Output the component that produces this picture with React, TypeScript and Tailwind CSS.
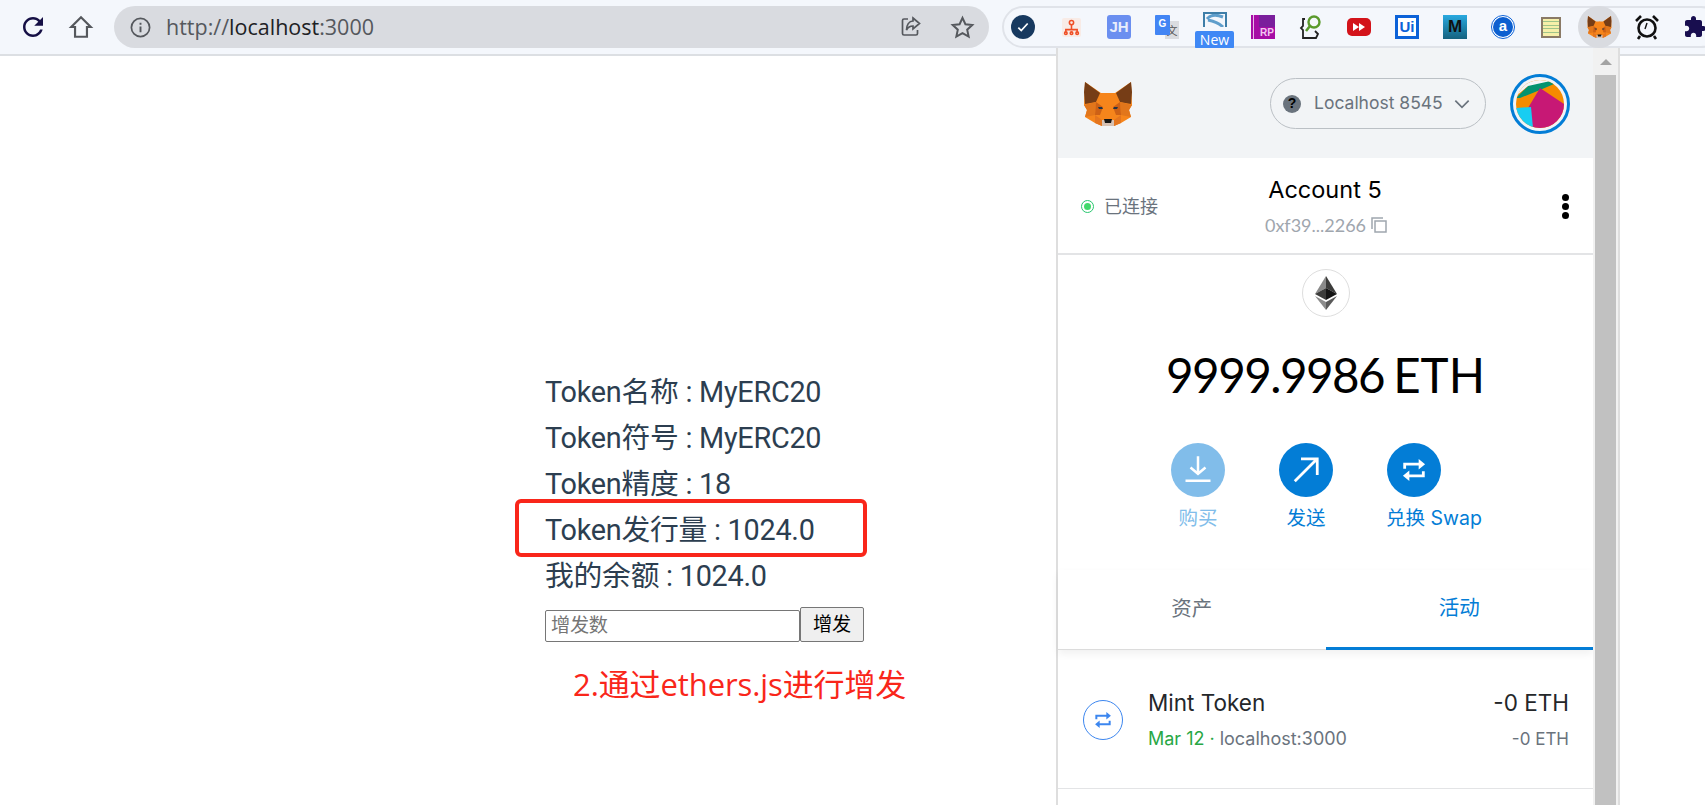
import React from 'react';

const Fox = ({ size }: { size: number }) => (
  <svg width={size} height={size * 0.94} viewBox="0 0 50 47">
    {/* head */}
    <polygon points="2,2 18,13 32,13 48,2 49,25 46,30 48,37 38,43 31,46 19,46 12,43 2,37 4,30 1,25" fill="#f6851b" />
    {/* ears */}
    <polygon points="2,2 17,13 13,22 2,24 1,12" fill="#763d16" />
    <polygon points="48,2 33,13 37,22 48,24 49,12" fill="#763d16" />
    {/* facets */}
    <polygon points="13,22 25,13 37,22 30,30 20,30" fill="#f6851b" />
    <polygon points="1,25 13,22 12,35 2,37 4,30" fill="#e2761b" />
    <polygon points="49,25 37,22 38,35 48,37 46,30" fill="#e2761b" />
    <polygon points="13,22 20,27 17,35 12,35" fill="#cd6116" />
    <polygon points="37,22 30,27 33,35 38,35" fill="#cd6116" />
    <polygon points="12,35 19,40 19,46 12,43" fill="#e4751f" />
    <polygon points="38,35 31,40 31,46 38,43" fill="#e4751f" />
    {/* muzzle */}
    <polygon points="19,40 31,40 31,46 19,46" fill="#d7c1b3" />
    <polygon points="21,39 29,39 28,43 22,43" fill="#161616" />
    {/* eyes */}
    <polygon points="15,27 19,27 20,29 16,29" fill="#233447" />
    <polygon points="35,27 31,27 30,29 34,29" fill="#233447" />
  </svg>
);

const SwapArrows = ({ size, color }: { size: number; color: string }) => (
  <svg width={size} height={size} viewBox="0 0 24 24" fill="none">
    <path d="M4 11V7h13M20 13v4H7" stroke={color} strokeWidth="2.4" />
    <path d="M16 2.5L21.5 7 16 11.5zM8 12.5L2.5 17 8 21.5z" fill={color} />
  </svg>
);

const Ext = ({ children }: { children: React.ReactNode }) => (
  <div className="w-[48px] h-[42px] flex items-center justify-center shrink-0 relative">{children}</div>
);

const ExtensionBar = () => (
  <div className="ml-[13px] h-[42px] w-[720px] shrink-0 flex items-center rounded-[21px] border-2 border-[#e0e3e9] bg-[#f4f7fc]">
    <div className="ml-[-5px] flex items-center">
      <Ext>
        <div className="w-[24px] h-[24px] rounded-full bg-[#17395f] flex items-center justify-center">
          <svg width="14" height="14" viewBox="0 0 24 24" fill="none">
            <path d="M4 13l5 5L20 6" stroke="#fff" strokeWidth="3" />
          </svg>
        </div>
      </Ext>
      <Ext>
        <div className="w-[19px] h-[19px] rounded-[2px] bg-[#f8ebe6] flex items-center justify-center">
          <svg width="17" height="17" viewBox="0 0 24 24" fill="none" stroke="#ef4f26" strokeWidth="2.2">
            <circle cx="12" cy="5" r="3" />
            <path d="M12 8v8M4 18v-3h16v3" />
            <circle cx="4" cy="20" r="1.8" />
            <circle cx="12" cy="20" r="1.8" />
            <circle cx="20" cy="20" r="1.8" />
          </svg>
        </div>
      </Ext>
      <Ext>
        <div className="w-[24px] h-[24px] rounded-[3px] bg-[#6b8ff0] flex items-center justify-center text-[#e8edfb] text-[15px] font-bold font-['Liberation_Sans',sans-serif]">JH</div>
      </Ext>
      <Ext>
        <div className="w-[24px] h-[24px] relative">
          <div className="absolute right-0 top-[6px] w-[14px] h-[18px] bg-[#dadce0] text-[#555] text-[11px] leading-[18px] text-center font-['Noto_Sans_CJK_SC',sans-serif]">文</div>
          <div className="absolute left-0 top-0 w-[15px] h-[20px] rounded-[1px] bg-[#4285f4] text-white text-[10px] font-bold leading-[18px] text-center font-['Liberation_Sans',sans-serif]">G</div>
        </div>
      </Ext>
      <Ext>
        <div className="absolute top-[6px] w-[24px] h-[15px] border-2 border-b-0 border-[#3e7ea8] overflow-hidden flex justify-center">
          <svg width="20" height="13" viewBox="0 0 20 13"><path d="M2 5C6 0 13 1 18 3M3 6c5 1 10 2 15 7" stroke="#5f9ecb" strokeWidth="3" fill="none" /></svg>
        </div>
        <div className="absolute bottom-[-1px] left-[4px] w-[39px] h-[18px] rounded-[2px] bg-[#3f88f5] text-white text-[14px] leading-[18px] text-center font-['Open_Sans',sans-serif]">New</div>
      </Ext>
      <Ext>
        <div className="w-[24px] h-[24px] bg-[#a60da5] relative overflow-hidden">
          <div className="absolute left-[2px] top-0 w-[1px] h-full bg-[#e9b8e8]" />
          <div className="absolute right-0 top-0 w-[16px] h-[12px] bg-[#7a1f9c]" />
          <div className="absolute right-[1px] bottom-[1px] text-[#f3c6f2] text-[10px] leading-[11px] font-bold font-['Liberation_Sans',sans-serif]">RP</div>
        </div>
      </Ext>
      <Ext>
        <svg width="24" height="26" viewBox="0 0 24 26" fill="none">
          <path d="M6 5H4v7l-2 2 2 2v8h13l2-4-3-3" stroke="#222" strokeWidth="1.8" />
          <circle cx="15" cy="8" r="5.5" stroke="#5a9a2c" strokeWidth="2.4" />
          <path d="M11 12l-4 5" stroke="#5a9a2c" strokeWidth="2.6" />
        </svg>
      </Ext>
      <Ext>
        <div className="w-[24px] h-[18px] rounded-[5px] bg-[#d3131a] flex items-center justify-center text-white">
          <svg width="14" height="10" viewBox="0 0 14 10" fill="#fff"><path d="M1 1l6 4-6 4zM7 1l6 4-6 4z" /></svg>
        </div>
      </Ext>
      <Ext>
        <div className="w-[24px] h-[24px] border-[3px] border-[#0c62d8] bg-white flex items-center justify-center text-[#0c62d8] text-[15px] font-bold font-['Liberation_Sans',sans-serif]">Ui</div>
      </Ext>
      <Ext>
        <div className="w-[24px] h-[24px] bg-gradient-to-b from-[#29a9e0] to-[#15627f] flex items-center justify-center text-[#111] text-[17px] font-bold font-['Liberation_Sans',sans-serif]">M</div>
      </Ext>
      <Ext>
        <div className="w-[24px] h-[24px] rounded-full border border-[#0c62d8] bg-white flex items-center justify-center">
          <div className="w-[20px] h-[20px] rounded-full bg-[#0c5fd0] text-white text-[15px] font-bold leading-[18px] text-center font-['Liberation_Sans',sans-serif]">a</div>
        </div>
      </Ext>
      <Ext>
        <div className="w-[20px] h-[21px] border-2 border-[#8a7a66] bg-[#f6efa9] flex flex-col justify-evenly">
          <div className="h-[1px] bg-[#9fc48a]" />
          <div className="h-[1px] bg-[#9fc48a]" />
          <div className="h-[1px] bg-[#9fc48a]" />
          <div className="h-[1px] bg-[#9fc48a]" />
        </div>
      </Ext>
      <Ext>
        <div className="w-[42px] h-[42px] rounded-full bg-[#d9dbe0] flex items-center justify-center">
          <Fox size={25} />
        </div>
      </Ext>
      <Ext>
        <svg width="24" height="26" viewBox="0 0 24 26" fill="none" stroke="#111">
          <circle cx="12" cy="14" r="8.5" strokeWidth="2.6" />
          <path d="M12 9l-2 6" strokeWidth="1.4" />
          <path d="M1 7l5-5M23 7l-5-5M5 22l-2 3M19 22l2 3" strokeWidth="2.6" />
        </svg>
      </Ext>
      <Ext>
        <svg width="24" height="24" viewBox="0 0 24 24" fill="#180e4f">
          <path d="M20.5 11H19V7c0-1.1-.9-2-2-2h-4V3.5C13 2.12 11.88 1 10.5 1S8 2.12 8 3.5V5H4c-1.1 0-1.99.9-1.99 2v3.8H3.5c1.49 0 2.7 1.21 2.7 2.7s-1.21 2.7-2.7 2.7H2V20c0 1.1.9 2 2 2h3.8v-1.5c0-1.49 1.21-2.7 2.7-2.7 1.49 0 2.7 1.21 2.7 2.7V22H17c1.1 0 2-.9 2-2v-4h1.5c1.38 0 2.5-1.12 2.5-2.5S21.88 11 20.5 11z" />
        </svg>
      </Ext>
    </div>
  </div>
);

const BrowserBar = () => (
  <div className="h-[56px] border-b-2 border-[#dcdfe3] bg-[#f4f7fc] flex items-center overflow-hidden font-['Open_Sans','Noto_Sans_CJK_SC',sans-serif]">
    <div className="w-[64px] pl-[18px] shrink-0">
      <svg width="30" height="30" viewBox="0 0 24 24" fill="#150f45">
        <path d="M17.65 6.35C16.2 4.9 14.21 4 12 4c-4.42 0-7.99 3.58-7.99 8s3.57 8 7.99 8c3.73 0 6.84-2.55 7.73-6h-2.08c-.82 2.33-3.04 4-5.65 4-3.31 0-6-2.69-6-6s2.69-6 6-6c1.66 0 3.14.69 4.22 1.78L13 11h7V4l-2.35 2.35z" />
      </svg>
    </div>
    <div className="w-[50px] shrink-0 pl-[4px]">
      <svg width="26" height="26" viewBox="0 0 24 24" fill="none" stroke="#55585d" strokeWidth="2">
        <path d="M12 3L3 12h3.5v9h11v-9H21z" />
      </svg>
    </div>
    <div className="w-[875px] h-[42px] shrink-0 rounded-[21px] bg-[#d9dbe0] flex items-center pl-[15px] pr-[14px]">
      <svg width="23" height="23" viewBox="0 0 24 24" fill="none" stroke="#55585d" strokeWidth="1.8">
        <circle cx="12" cy="12" r="9.5" />
        <path d="M12 11v6M12 7v2" strokeWidth="2" />
      </svg>
      <div className="ml-[14px] text-[21.5px] text-[#55585d] whitespace-nowrap">
        http://<span className="text-[#202124]">localhost</span>:3000
      </div>
      <svg className="ml-auto" width="24" height="24" viewBox="0 0 24 24" fill="none" stroke="#55585d" strokeWidth="1.7">
        <path d="M9 4H5a1.5 1.5 0 0 0-1.5 1.5v13A1.5 1.5 0 0 0 5 20h12a1.5 1.5 0 0 0 1.5-1.5V15" />
        <path d="M14 3l6.5 5.5L14 14v-3c-3 0-5 1-6.5 4 0-5 2.5-9 6.5-9z" />
      </svg>
      <svg className="ml-[27px]" width="25" height="25" viewBox="0 0 24 24" fill="none" stroke="#55585d" strokeWidth="1.9">
        <path d="M12 2.8l2.8 6.1 6.6.7-4.9 4.5 1.4 6.6L12 17.400l-5.900 3.300 1.400-6.600-4.900-4.500 6.600-.7z" />
      </svg>
    </div>
    <ExtensionBar />
  </div>
);

const PageContent = () => (
  <div className="pt-[313px] pl-[545px] text-[#2c3e50] text-[28.8px] leading-[46px] tracking-[-0.25px] font-['Roboto','Noto_Sans_CJK_SC',sans-serif]">
    <div>Token名称 : MyERC20</div>
    <div>Token符号 : MyERC20</div>
    <div>Token精度 : 18</div>
    <div>Token发行量 : 1024.0</div>
    <div>我的余额 : 1024.0</div>
    <div className="flex items-end mt-[8px]">
      <input
        placeholder="增发数"
        className="w-[255px] h-[32px] border border-[#767676] rounded-[2px] px-[5px] text-[19.200px] text-black placeholder:text-[#757575] bg-white outline-none"
      />
      <button className="w-[64px] h-[35px] border border-[#767676] rounded-[2px] bg-[#efefef] text-[19.200px] leading-none text-black">增发</button>
    </div>
  </div>
);

const ActionButton = ({ label, icon, faded, shift }: { label: string; icon: React.ReactNode; faded?: boolean; shift?: boolean }) => (
  <div className="w-[108px] flex flex-col items-center">
    <div className={`w-[54px] h-[54px] rounded-full flex items-center justify-center ${faded ? 'bg-[#81bdea]' : 'bg-[#037dd6]'}`}>{icon}</div>
    <div className={`mt-[9px] text-[19.5px] leading-[24px] whitespace-nowrap ${faded ? 'text-[#81bdea]' : 'text-[#037dd6]'} ${shift ? 'translate-x-[20px]' : ''}`}>{label}</div>
  </div>
);

const MetaMaskPopup = () => (
  <div className="absolute left-[1056px] top-[48px] w-[564px] h-[757px] flex bg-white border-x-2 border-[#dedede] font-['Inter','Noto_Sans_CJK_SC',sans-serif]">
    <div className="flex-1 min-w-0 flex flex-col">
      {/* Header */}
      <div className="h-[110px] shrink-0 bg-[#f2f4f6] flex items-center pl-[25px] pr-[23px] pt-[1px]">
        <Fox size={50} />
        <div className="ml-auto w-[216px] h-[51px] rounded-full border border-[#bbc0c5] flex items-center pl-[12px] pr-[13px] text-[#6a737d]">
          <div className="w-[18px] h-[18px] rounded-full bg-[#6a737d] flex items-center justify-center text-black text-[14px] font-black font-['Liberation_Sans',sans-serif]">?</div>
          <span className="ml-[13px] text-[17.5px] whitespace-nowrap">Localhost 8545</span>
          <svg className="ml-auto" width="20" height="20" viewBox="0 0 24 24" fill="none" stroke="#6a737d" strokeWidth="2">
            <path d="M4 8l8 8 8-8" />
          </svg>
        </div>
        <div className="ml-[24px] w-[60px] h-[60px] rounded-full border-[3px] border-[#037dd6] p-[3px]">
          <svg className="w-full h-full rounded-full" viewBox="0 0 48 48">
            <rect width="48" height="48" fill="#f58b00" />
            <polygon points="0,18 14,4 34,0 38,4 24,10 4,18" fill="#03936f" />
            <polygon points="0,16 12,6 30,2 48,0 0,0" fill="#f2f4f6" />
            <polygon points="24,8 48,24 48,48 17,48 12,28" fill="#c71875" />
            <polygon points="0,28 15,27 17,48 0,48" fill="#18cdf2" />
          </svg>
        </div>
      </div>
      {/* Account row */}
      <div className="h-[97px] shrink-0 border-b-2 border-[#e3e4e6] grid grid-cols-[1fr_auto_1fr] items-center pl-[23px] pr-[24px]">
        <div className="flex items-center mt-[2px] text-[#6a737d] text-[18px]">
          <div className="w-[13px] h-[13px] rounded-full border border-[#28c76f] flex items-center justify-center">
            <div className="w-[7px] h-[7px] rounded-full bg-[#41d96b]" />
          </div>
          <span className="ml-[10px]">已连接</span>
        </div>
        <div className="flex flex-col items-center">
          <div className="text-[23.5px] leading-[30px] text-black">Account 5</div>
          <div className="flex items-center mt-[9px] ml-[3px] text-[18px] leading-[22px] text-[#9fa6ae] font-['Lato',sans-serif]">
            0xf39...2266
            <svg className="ml-[4px]" width="18" height="18" viewBox="0 0 18 18" fill="none" stroke="#9fa6ae" strokeWidth="1.5">
              <path d="M2 13V2h11" />
              <rect x="5" y="5" width="11" height="11" />
            </svg>
          </div>
        </div>
        <div className="flex flex-col items-end gap-[2px] mt-[2px]">
          <div className="w-[7px] h-[7px] rounded-full bg-black" />
          <div className="w-[7px] h-[7px] rounded-full bg-black" />
          <div className="w-[7px] h-[7px] rounded-full bg-black" />
        </div>
      </div>
      {/* Balance */}
      <div className="flex flex-col items-center pt-[14px] shrink-0">
        <div className="w-[48px] h-[48px] rounded-full border border-[#dedede] flex items-center justify-center">
          <svg width="22" height="34" viewBox="0 0 22 34">
            <polygon points="11,0 0,18 11,12" fill="#8a8a8a" />
            <polygon points="11,0 22,18 11,12" fill="#3c3c3b" />
            <polygon points="11,12 0,18 11,24" fill="#3c3c3b" />
            <polygon points="11,12 22,18 11,24" fill="#141414" />
            <polygon points="0,20 11,34 11,26" fill="#8c8c8c" />
            <polygon points="22,20 11,34 11,26" fill="#5a5a5a" />
          </svg>
        </div>
        <div className="mt-[29px] text-[47.5px] leading-[58px] text-black whitespace-nowrap font-['Lato',sans-serif]">
          <span className="tracking-[-1.5px]">9999.9986</span>
          <span className="ml-[9px]">ETH</span>
        </div>
        <div className="mt-[39px] self-start ml-[86px] flex">
          <ActionButton
            faded
            label="购买"
            icon={
              <svg width="30" height="30" viewBox="0 0 24 24" fill="none" stroke="#fff" strokeWidth="2">
                <path d="M12 1v14M6 10l6 5 6-5M2 20.500h20" />
              </svg>
            }
          />
          <ActionButton
            label="发送"
            icon={
              <svg width="30" height="30" viewBox="0 0 24 24" fill="none" stroke="#fff" strokeWidth="2.200">
                <path d="M3 21L21 3M8 3h13v13" />
              </svg>
            }
          />
          <ActionButton shift label="兑换 Swap" icon={<SwapArrows size={28} color="#fff" />} />
        </div>
      </div>
      {/* Tabs */}
      <div className="mt-[40px] h-[80px] shrink-0 flex border-b border-[#dcdcdc] shadow-[0_4px_8px_rgba(0,0,0,0.06)] text-[20.5px]">
        <div className="flex-1 flex items-center justify-center text-[#6a737d]">资产</div>
        <div className="flex-1 flex items-center justify-center text-[#037dd6] border-b-[3px] border-[#037dd6] mb-[-1px]">活动</div>
      </div>
      {/* Activity */}
      <div className="h-[139px] shrink-0 border-b border-[#e3e4e6] flex items-center pl-[25px] pr-[24px] pt-[1px]">
        <div className="w-[40px] h-[40px] rounded-full border border-[#3c86ef] flex items-center justify-center">
          <SwapArrows size={20} color="#3c86ef" />
        </div>
        <div className="ml-[25px]">
          <div className="text-[22.5px] leading-[30px] text-[#24272a]">Mint Token</div>
          <div className="mt-[9px] text-[18px] leading-[24px] text-[#6a737d]">
            <span className="text-[#28a745]">Mar 12</span>
            <span className="text-[#28a745] mx-[5px]">·</span>
            localhost:3000
          </div>
        </div>
        <div className="ml-auto text-right">
          <div className="text-[22.5px] leading-[30px] text-[#24272a]">-0 ETH</div>
          <div className="mt-[9px] text-[17px] leading-[24px] text-[#6a737d]">-0 ETH</div>
        </div>
      </div>
    </div>
    {/* Scrollbar */}
    <div className="w-[25px] shrink-0 bg-[#f1f1f1] flex flex-col items-center">
      <div className="h-[27px] shrink-0 flex items-center justify-center">
        <div className="w-0 h-0 border-l-[6px] border-r-[6px] border-b-[6px] border-l-transparent border-r-transparent border-b-[#a3a3a3]" />
      </div>
      <div className="w-[21px] flex-1 bg-[#c1c1c1]" />
    </div>
  </div>
);

export default function App() {
  return (
    <div className="relative w-[1705px] h-[805px] overflow-hidden bg-white">
      <BrowserBar />
      <PageContent />
      {/* Screenshot annotations */}
      <div className="absolute left-[515px] top-[499px] w-[352px] h-[58px] border-[4px] border-[#f9261a] rounded-[6px]" />
      <div className="absolute left-[573px] top-[661px] text-[#f9261a] text-[31px] leading-[46px] tracking-[-0.1px] whitespace-nowrap font-['Open_Sans','Noto_Sans_CJK_SC',sans-serif]">
        2.通过ethers.js进行增发
      </div>
      <MetaMaskPopup />
    </div>
  );
}
